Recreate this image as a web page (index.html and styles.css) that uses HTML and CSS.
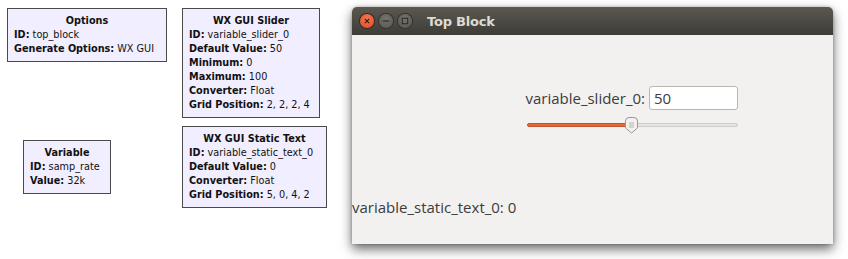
FILE: index.html
```html
<!DOCTYPE html>
<html>
<head>
<meta charset="utf-8">
<link rel="stylesheet" href="styles.css">
</head>
<body>
<div class="canvas">
  <div class="block block-options">
    <div class="block-title">Options</div>
    <div><b>ID:</b> top_block</div>
    <div><b>Generate Options:</b> WX GUI</div>
  </div>
  <div class="block block-slider">
    <div class="block-title">WX GUI Slider</div>
    <div><b>ID:</b> variable_slider_0</div>
    <div><b>Default Value:</b> 50</div>
    <div><b>Minimum:</b> 0</div>
    <div><b>Maximum:</b> 100</div>
    <div><b>Converter:</b> Float</div>
    <div><b>Grid Position:</b> 2, 2, 2, 4</div>
  </div>
  <div class="block block-variable">
    <div class="block-title">Variable</div>
    <div><b>ID:</b> samp_rate</div>
    <div><b>Value:</b> 32k</div>
  </div>
  <div class="block block-static">
    <div class="block-title">WX GUI Static Text</div>
    <div><b>ID:</b> variable_static_text_0</div>
    <div><b>Default Value:</b> 0</div>
    <div><b>Converter:</b> Float</div>
    <div><b>Grid Position:</b> 5, 0, 4, 2</div>
  </div>

  <div class="window">
    <div class="titlebar">
      <div class="wbtns">
        <span class="wbtn wbtn-close"><svg width="14" height="14" viewBox="0 0 14 14"><path d="M4.8 4.8 L9.2 9.2 M9.2 4.8 L4.8 9.2" stroke="#3a1a12" stroke-width="1.2"/></svg></span>
        <span class="wbtn wbtn-gray"><svg width="14" height="14" viewBox="0 0 14 14"><path d="M3.8 7 H10.2" stroke="#2e2d2a" stroke-width="1.2"/></svg></span>
        <span class="wbtn wbtn-gray"><svg width="14" height="14" viewBox="0 0 14 14"><rect x="4.3" y="4.3" width="5.4" height="5.4" fill="none" stroke="#2e2d2a" stroke-width="1.1"/></svg></span>
      </div>
      <div class="wtitle">Top Block</div>
    </div>
    <div class="wbody">
      <div class="slider-group">
        <div class="slider-row">
          <span class="slabel">variable_slider_0:</span>
          <span class="sinput">50</span>
        </div>
        <div class="track">
          <div class="track-fill" style="width:103px"></div>
          <div class="thumb" style="left:96px">
            <svg width="15" height="17" viewBox="0 0 15 17"><path d="M1.5 4 Q1.5 0.5 5 0.5 H10 Q13.5 0.5 13.5 4 V11 L7.5 16 L1.5 11 Z" fill="#f2f1ef" stroke="#9a9893" stroke-width="1"/><path d="M5 6 H10 M5 8 H10 M5 10 H10" stroke="#a9a7a2" stroke-width="0.8"/></svg>
          </div>
        </div>
      </div>
      <div class="static-text">variable_static_text_0: 0</div>
    </div>
  </div>
</div>
</body>
</html>
```

FILE: styles.css
```css
html, body {
  margin: 0;
  padding: 0;
  background: #ffffff;
}
.canvas {
  position: relative;
  width: 848px;
  height: 259px;
  overflow: hidden;
}
.block {
  position: absolute;
  box-sizing: border-box;
  background: #f1eeff;
  border: 1px solid #4a4a4a;
  padding: 5px 6px 5px 6px;
  font-family: "DejaVu Sans", sans-serif;
  font-size: 9.7px;
  line-height: 14px;
  color: #111;
  white-space: nowrap;
}
.block b {
  font-weight: bold;
}
.block-title {
  text-align: center;
  font-weight: bold;
}
.block-options { left: 7px; top: 8px; width: 160px; }
.block-slider { left: 182px; top: 8px; width: 138px; }
.block-variable { left: 23px; top: 140px; width: 88px; }
.block-static { left: 182px; top: 126px; width: 145px; }

.window {
  position: absolute;
  left: 352px;
  top: 7px;
  width: 481px;
  height: 237px;
  border-radius: 5px 5px 0 0;
  box-shadow: 0 5px 12px rgba(0,0,0,0.6), 0 0 3px rgba(0,0,0,0.25);
  display: flex;
  flex-direction: column;
  background: #f2f1f0;
}
.titlebar {
  height: 28px;
  flex: none;
  border-radius: 5px 5px 0 0;
  background: linear-gradient(#5b5850, #3d3c37);
  display: flex;
  align-items: center;
  padding-left: 8px;
}
.wbtns {
  display: flex;
  gap: 5px;
}
.wbtn {
  width: 14px;
  height: 14px;
  border-radius: 50%;
  display: flex;
}
.wbtn-close {
  background: radial-gradient(circle at 50% 35%, #f7774f, #dd4a22);
  box-shadow: 0 0 0 1px #3a2a22;
}
.wbtn-gray {
  background: radial-gradient(circle at 50% 35%, #76746d, #57554f);
  box-shadow: 0 0 0 1px #34332f;
}
.wtitle {
  margin-left: 15px;
  font-family: "DejaVu Sans", sans-serif;
  font-weight: bold;
  font-size: 13px;
  color: #dfdbd2;
  letter-spacing: -0.2px;
}
.wbody {
  flex: 1;
  display: flex;
  flex-direction: column;
  padding-top: 51px;
}
.slider-group {
  margin-left: 172px;
  width: 214px;
  display: flex;
  flex-direction: column;
}
.slider-row {
  display: flex;
  justify-content: flex-end;
  align-items: center;
  gap: 4px;
}
.slabel {
  font-family: "Open Sans", sans-serif;
  font-size: 15px;
  color: #3c3c3c;
}
.sinput {
  box-sizing: border-box;
  width: 89px;
  height: 24px;
  border: 1px solid #b9b6b1;
  border-radius: 3px;
  background: #fff;
  font-family: "Open Sans", sans-serif;
  font-size: 15px;
  color: #3c3c3c;
  padding-left: 4px;
  line-height: 22px;
}
.track {
  position: relative;
  margin-top: 13px;
  margin-left: 3px;
  height: 4px;
  border-radius: 2px;
  background: #e6e4e1;
  border: 1px solid #cfccc8;
  box-sizing: border-box;
}
.track-fill {
  position: absolute;
  left: -1px;
  top: -1px;
  height: 4px;
  border-radius: 2px;
  background: #e2693f;
  border: 1px solid #c4532c;
  box-sizing: border-box;
}
.thumb {
  position: absolute;
  top: -7px;
  width: 15px;
  height: 17px;
}
.thumb svg { display: block; }
.static-text {
  margin-top: 70px;
  font-family: "Open Sans", sans-serif;
  font-size: 15px;
  color: #3c3c3c;
}
```
